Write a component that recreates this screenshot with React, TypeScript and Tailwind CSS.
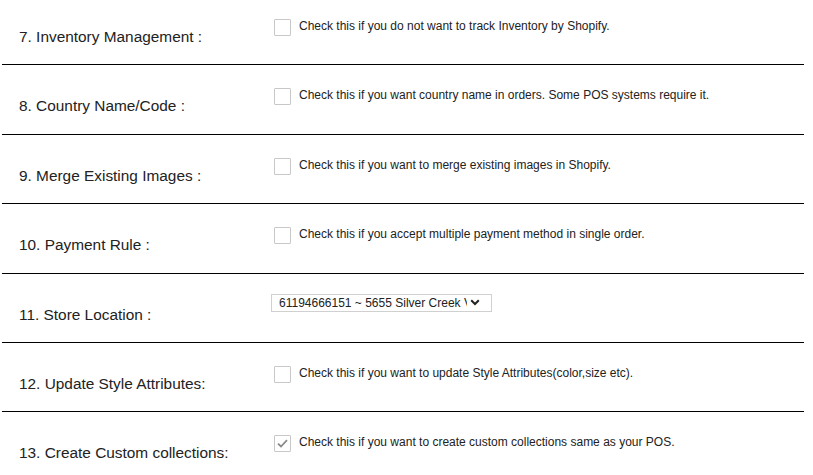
import React from "react";

const rows: { label: string; desc?: string; checked?: boolean; select?: boolean }[] = [
  { label: "7. Inventory Management :", desc: "Check this if you do not want to track Inventory by Shopify." },
  { label: "8. Country Name/Code :", desc: "Check this if you want country name in orders. Some POS systems require it." },
  { label: "9. Merge Existing Images :", desc: "Check this if you want to merge existing images in Shopify." },
  { label: "10. Payment Rule :", desc: "Check this if you accept multiple payment method in single order." },
  { label: "11. Store Location :", select: true },
  { label: "12. Update Style Attributes:", desc: "Check this if you want to update Style Attributes(color,size etc)." },
  { label: "13. Create Custom collections:", desc: "Check this if you want to create custom collections same as your POS.", checked: true },
];

function Box({ checked }: { checked?: boolean }) {
  return (
    <div className="w-[17px] h-[17px] border border-[#c8c8c8] bg-white rounded-[1px] flex items-center justify-center shrink-0">
      {checked && (
        <svg width="11" height="9" viewBox="0 0 11 9">
          <path d="M1 4.6 L4 7.5 L10 1.2" fill="none" stroke="#8a8a8a" strokeWidth="1.8" />
        </svg>
      )}
    </div>
  );
}

export default function App() {
  return (
    <div className="w-[813px] h-[475px] overflow-hidden bg-white" style={{ fontFamily: '"Liberation Sans", Arial, sans-serif' }}>
      <div className="-mt-[4px] pl-[2px] w-[804px]">
        {rows.map((r, i) => (
          <div key={i} className="h-[69.4px] border-b border-black flex relative">
            <div className="w-[270px] pl-[17px] pt-[32px] text-[15.4px] leading-[17px] text-[#222]">{r.label}</div>
            {r.select ? (
              <div className="pt-[20px] -ml-[1px]">
                <div className="w-[221px] h-[18px] border border-[#d0d0d0] flex items-center pl-[7px] pr-[5px] text-[12px] text-[#222]">
                  <span className="whitespace-nowrap overflow-hidden w-[188px]">61194666151 ~ 5655 Silver Creek V</span>
                  <svg width="10" height="7" viewBox="0 0 10 7" className="ml-[3px]">
                    <path d="M1.2 1.2 L5 5 L8.8 1.2" fill="none" stroke="#222" strokeWidth="2" />
                  </svg>
                </div>
              </div>
            ) : (
              <div className="pt-[23px] pl-[2px] flex items-start">
                <Box checked={r.checked} />
                <span className="ml-[8px] text-[12px] leading-[14px] text-[#222] whitespace-nowrap">{r.desc}</span>
              </div>
            )}
          </div>
        ))}
      </div>
    </div>
  );
}
